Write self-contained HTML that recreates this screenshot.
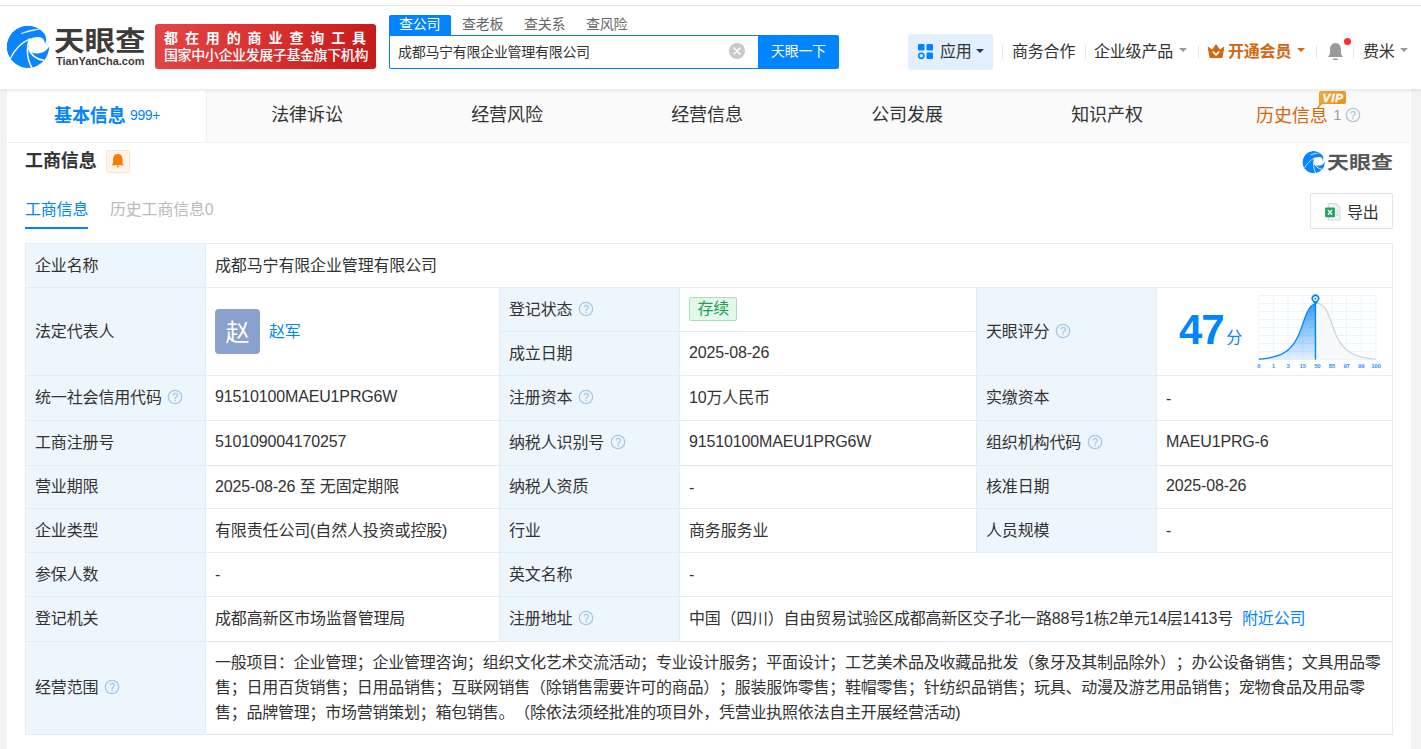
<!DOCTYPE html>
<html lang="zh-CN">
<head>
<meta charset="utf-8">
<title>成都马宁有限企业管理有限公司 - 天眼查</title>
<style>
*{box-sizing:border-box;margin:0;padding:0}
html,body{width:1421px;height:749px;overflow:hidden;background:#f3f3f3;}
body{position:relative;font-family:"Liberation Sans","Noto Sans CJK SC",sans-serif;font-size:16px;color:#333;}
.abs{position:absolute;white-space:nowrap;line-height:1}
#hdr{position:absolute;left:0;top:0;width:1421px;height:89px;background:#fff;box-shadow:0 0 5px rgba(0,0,0,.16);z-index:5}
#topline{position:absolute;left:0;top:5px;width:1421px;height:1px;background:#e6e6e6}
#main{position:absolute;left:7px;top:88px;width:1404px;height:661px;background:#fff}
/* header */
.t16{font-size:16px;letter-spacing:-0.2px}
.t14{font-size:14px;letter-spacing:-0.3px}
.sep{position:absolute;width:1px;height:14px;top:45px;background:#e4e7ed}
.caret{position:absolute;width:0;height:0;border-left:4px solid transparent;border-right:4px solid transparent;border-top:4px solid #999}
/* tabs */
#tabs{position:absolute;left:0;top:2px;width:1403px;height:53px;background:#fafafa;border-bottom:1px solid #f0f0f0}
.tab{position:absolute;top:0;height:52px;width:200px;text-align:center;font-size:18px;line-height:51px;letter-spacing:-0.1px;color:#333;white-space:nowrap}
/* table */
.cell{position:absolute;border-right:1px solid #e2ecf5;border-bottom:1px solid #e2ecf5;padding-left:9px;padding-bottom:4px;display:flex;align-items:center;white-space:nowrap;font-size:16px;letter-spacing:-0.15px;color:#333;background:#fff}
.lab{background:#eef6fd}
.q{flex:none;margin-left:5.5px;position:relative;top:1.4px}
#tbl{position:absolute;left:18px;top:155px;width:1368px;height:492px;border-left:1px solid #e2ecf5;border-top:1px solid #e2ecf5}
#tbl .cell{margin-left:-1px;margin-top:-1px}
.lnk{color:#0084ff}
.ava{position:relative;top:2px;display:inline-block;width:45px;height:45px;border-radius:4px;background:#8aa0cd;color:#fff;font-size:24px;line-height:48px;text-align:center;letter-spacing:0;overflow:hidden}
.st{position:relative;top:1.3px;display:inline-block;height:24px;line-height:22px;padding:0 7.5px;border:1px solid #a6e1bb;background:#e3f7ea;color:#1e9e55;border-radius:2px;font-size:16px;letter-spacing:-0.3px}
.sc{font-size:42px;font-weight:bold;color:#0084ff;letter-spacing:-1px;font-family:"Liberation Sans",sans-serif}
.fen{font-size:16px;color:#0084ff;margin-left:2.5px;position:relative;top:6px}
.scope{white-space:nowrap;text-spacing-trim:space-all;line-height:25px;font-size:16px;letter-spacing:-0.25px}
.up{position:relative;top:1px}
.dash{position:relative;top:2.5px}
</style>
</head>
<body>
<div id="hdr">
<div id="topline"></div>
<!-- logo -->
<svg class="abs" style="left:2px;top:20px" width="54" height="54" viewBox="0 0 749 749">
<defs><clipPath id="lc"><circle cx="360" cy="372" r="295"/></clipPath></defs>
<g id="swirl" clip-path="url(#lc)">
<circle cx="360" cy="372" r="295" fill="#0a84ff"/>
<path d="M520,126 C585,160 640,250 597,332 L658,350 L760,300 L760,60 L520,60 Z" fill="#fff"/>
<path d="M380,265 C450,232 540,222 572,265 C590,290 596,312 597,332 L660,348 C640,410 585,458 500,463 C450,466 420,456 398,445 C375,420 362,395 366,375 C362,335 368,298 380,265 Z" fill="#fff"/>
<path d="M262,190 C340,148 430,128 522,128 C440,146 350,166 262,190 Z" fill="#fff" stroke="#fff" stroke-width="6"/>
<path d="M118,530 C170,420 260,320 385,262" fill="none" stroke="#fff" stroke-width="17" stroke-linecap="round"/>
<path d="M418,668 C356,560 332,410 380,265" fill="none" stroke="#fff" stroke-width="21"/>
<path d="M585,562 C480,545 395,480 364,385" fill="none" stroke="#fff" stroke-width="23"/>
</g>
</svg>
<div class="abs" id="lgt" style="left:54px;top:23px;font-size:27px;font-weight:700;color:#3e3a39;letter-spacing:0px;line-height:34px;font-family:'Noto Sans CJK SC',sans-serif;transform:scaleX(1.13);transform-origin:0 0">天眼查</div>
<div class="abs" id="lge" style="left:56px;top:55px;font-size:11px;font-weight:bold;color:#3e3a39;letter-spacing:0px;line-height:12px">TianYanCha.com</div>
<!-- red banner -->
<div class="abs" style="left:155px;top:24px;width:221px;height:44.7px;border-radius:3px;background:linear-gradient(100deg,#e24545 0%,#d93030 50%,#c61a1a 100%)"></div>
<div class="abs" style="left:164px;top:31px;font-size:14px;font-weight:bold;color:#fff;letter-spacing:6.9px;line-height:15px">都在用的商业查询工具</div>
<div class="abs" style="left:164px;top:48px;font-size:14px;font-weight:500;color:#fff;letter-spacing:-0.4px;line-height:15px">国家中小企业发展子基金旗下机构</div>
<!-- search -->
<div class="abs" style="left:389px;top:15px;width:62px;height:21px;background:#0084ff;border-radius:2px 2px 0 0"></div>
<div class="abs t14" style="left:399px;top:16px;color:#fff;line-height:16px">查公司</div>
<div class="abs t14" style="left:462px;top:16px;color:#666;line-height:16px">查老板</div>
<div class="abs t14" style="left:524px;top:16px;color:#666;line-height:16px">查关系</div>
<div class="abs t14" style="left:586px;top:16px;color:#666;line-height:16px">查风险</div>
<div class="abs" style="left:389px;top:35px;width:370px;height:34px;border:1px solid #0084ff;border-radius:2px 0 0 2px;background:#fff"></div>
<div class="abs t14" style="left:398px;top:44px;color:#333;line-height:16px">成都马宁有限企业管理有限公司</div>
<svg class="abs" style="left:728px;top:42px" width="18" height="18" viewBox="0 0 18 18"><circle cx="9" cy="9" r="8" fill="#c8c9cc"/><path d="M6,6 L12,12 M12,6 L6,12" stroke="#fff" stroke-width="1.6" stroke-linecap="round"/></svg>
<div class="abs" style="left:758px;top:35px;width:81px;height:34px;background:#0084ff;border-radius:0 2px 2px 0"></div>
<div class="abs t14" style="left:771px;top:43px;color:#fff;line-height:16px">天眼一下</div>
<!-- nav -->
<div class="abs" style="left:908px;top:34px;width:85px;height:36px;background:#e1efff;border-radius:3px"></div>
<svg class="abs" style="left:917px;top:43px" width="17" height="17" viewBox="0 0 17 17"><rect x="1" y="1" width="6.5" height="6.5" rx="1.2" fill="#0084ff"/><rect x="9.5" y="1" width="6.5" height="6.5" rx="1.2" fill="#0084ff"/><rect x="9.5" y="9.5" width="6.5" height="6.5" rx="1.2" fill="#0084ff"/><circle cx="4.3" cy="12.8" r="2.6" fill="none" stroke="#0084ff" stroke-width="1.6"/></svg>
<div class="abs t16" style="left:940px;top:43px;color:#333;line-height:18px">应用</div>
<div class="caret" style="left:976px;top:49px;border-top-color:#333"></div>
<div class="sep" style="left:1002px"></div>
<div class="abs t16" style="left:1012px;top:43px;color:#333;line-height:18px">商务合作</div>
<div class="sep" style="left:1085px"></div>
<div class="abs t16" style="left:1094px;top:43px;color:#333;line-height:18px">企业级产品</div>
<div class="caret" style="left:1179px;top:48px"></div>
<div class="sep" style="left:1198px"></div>
<svg class="abs" style="left:1207px;top:43px" width="18" height="16" viewBox="0 0 18 16"><path d="M1.2,4.2 L5.2,7.2 L9,1.6 L12.8,7.2 L16.8,4.2 L15,14.6 L3,14.6 Z" fill="#d4670d" stroke="#d4670d" stroke-width="1" stroke-linejoin="round"/><path d="M6.3,9 L9,11.8 L11.7,9" fill="none" stroke="#fff" stroke-width="1.8" stroke-linecap="round" stroke-linejoin="round"/></svg>
<div class="abs t16" style="left:1228px;top:43px;color:#d4670d;font-weight:bold;line-height:18px">开通会员</div>
<div class="caret" style="left:1296.5px;top:48px;border-top-color:#d4670d"></div>
<div class="sep" style="left:1316px"></div>
<svg class="abs" style="left:1326px;top:41px" width="19" height="21" viewBox="0 0 19 21"><path d="M9.5,2 C5.8,2 4,5 4,8.5 L4,13 L2,16 L17,16 L15,13 L15,8.5 C15,5 13.2,2 9.5,2 Z" fill="#9a9a9a"/><rect x="7" y="17.6" width="5" height="1.3" rx=".6" fill="#9a9a9a"/></svg>
<div class="abs" style="left:1344px;top:38px;width:7px;height:7px;border-radius:50%;background:#ff2d2d"></div>
<div class="sep" style="left:1353px"></div>
<div class="abs t16" style="left:1363px;top:43px;color:#333;line-height:18px">费米</div>
<div class="caret" style="left:1400px;top:48px"></div>
</div>
<div id="main">
<div id="tabs">
<div class="tab" style="left:0;width:200px;height:52px;background:#fff;border-right:1px solid #f0f0f0"></div>
<div class="abs" id="tb0" style="left:47px;top:15px;font-size:18px;font-weight:bold;color:#0084ff;letter-spacing:-0.1px;line-height:22px">基本信息</div>
<div class="abs" style="left:123px;top:17px;font-size:14px;color:#0084ff;letter-spacing:-0.4px;line-height:16px">999+</div>
<div class="tab" style="left:200px">法律诉讼</div>
<div class="tab" style="left:400px">经营风险</div>
<div class="tab" style="left:600px">经营信息</div>
<div class="tab" style="left:800px">公司发展</div>
<div class="tab" style="left:1000px">知识产权</div>
<div class="abs" id="tb6" style="left:1249px;top:15px;font-size:18px;color:#d4670d;letter-spacing:-0.1px;line-height:22px">历史信息</div>
<div class="abs" style="left:1326.5px;top:17px;font-size:14px;color:#999;line-height:16px">1</div>
<svg class="abs" style="left:1337.7px;top:16.9px" width="16" height="16" viewBox="0 0 16 16"><circle cx="8" cy="8" r="6.7" fill="none" stroke="#b7c6d8" stroke-width="1.3"/><text x="8" y="11.7" text-anchor="middle" font-size="10.5" fill="#b7c6d8" stroke="#b7c6d8" stroke-width=".3" font-family="Liberation Sans, sans-serif">?</text></svg>
<svg class="abs" style="left:1311px;top:0px" width="30" height="18" viewBox="0 0 30 18"><defs><linearGradient id="vg" x1="0" y1="0" x2="1" y2="1"><stop offset="0" stop-color="#f6a93f"/><stop offset="1" stop-color="#ea8a1c"/></linearGradient></defs><path d="M3,1 H26 Q28,1 28,3 V12 Q28,14 26,14 H4.5 L1,17 V3 Q1,1 3,1 Z" fill="url(#vg)"/><text x="15.2" y="11.9" font-family="Liberation Sans, sans-serif" font-size="11.5" font-weight="bold" font-style="italic" fill="#fff" stroke="#fff" stroke-width="0.4" text-anchor="middle" letter-spacing="0.9">VIP</text></svg>
</div>
<!-- section head -->
<div class="abs" id="sh" style="left:18px;top:62px;font-size:18px;font-weight:bold;color:#333;letter-spacing:-0.1px;line-height:22px">工商信息</div>
<div class="abs" style="left:99px;top:62px;width:24px;height:23px;background:#fff4e9;border:1px solid #ffe4cc;border-radius:2px"></div>
<svg class="abs" style="left:103.2px;top:65.3px" width="15.6" height="16.7" viewBox="0 0 14 15"><path d="M7,1 C4.2,1 2.8,3.2 2.8,5.8 L2.8,9 L1.6,11 L12.4,11 L11.2,9 L11.2,5.8 C11.2,3.2 9.8,1 7,1 Z" fill="#ff7a00"/><path d="M5.6,11.6 H8.4 L7,13.2 Z" fill="#ff7a00"/></svg>
<svg class="abs" style="left:1293.3px;top:59.5px" width="28.5" height="28.5" viewBox="0 0 749 749"><defs><clipPath id="lc2"><circle cx="360" cy="372" r="295"/></clipPath></defs><g clip-path="url(#lc2)">
<circle cx="360" cy="372" r="295" fill="#0a84ff"/>
<path d="M520,126 C585,160 640,250 597,332 L658,350 L760,300 L760,60 L520,60 Z" fill="#fff"/>
<path d="M380,265 C450,232 540,222 572,265 C590,290 596,312 597,332 L660,348 C640,410 585,458 500,463 C450,466 420,456 398,445 C375,420 362,395 366,375 C362,335 368,298 380,265 Z" fill="#fff"/>
<path d="M262,190 C340,148 430,128 522,128 C440,146 350,166 262,190 Z" fill="#fff" stroke="#fff" stroke-width="6"/>
<path d="M118,530 C170,420 260,320 385,262" fill="none" stroke="#fff" stroke-width="17" stroke-linecap="round"/>
<path d="M418,668 C356,560 332,410 380,265" fill="none" stroke="#fff" stroke-width="21"/>
<path d="M585,562 C480,545 395,480 364,385" fill="none" stroke="#fff" stroke-width="23"/>
</g></svg>
<div class="abs" id="sl" style="left:1320px;top:59.8px;font-size:17.8px;font-weight:700;color:#555;line-height:26px;font-family:'Noto Sans CJK SC',sans-serif;transform:scaleX(1.235);transform-origin:0 0">天眼查</div>
<!-- sub tabs -->
<div class="abs t16" id="st0" style="left:18px;top:113px;color:#0084ff;line-height:18px">工商信息</div>
<div class="abs" style="left:18px;top:138.5px;width:63px;height:2.5px;background:#0084ff"></div>
<div class="abs t16" id="st1" style="left:103px;top:113px;color:#bbb;line-height:18px">历史工商信息0</div>
<div class="abs" style="left:1303px;top:105px;width:83px;height:36px;border:1px solid #dfe3ee;border-radius:2px;background:#fff"></div>
<svg class="abs" style="left:1316.5px;top:113.6px" width="17.5" height="19.7" viewBox="0 0 16 18"><path d="M4,1.5 H11 L14.5,5 V16.5 H4 Z" fill="#f4f5f7" stroke="#d5d8de" stroke-width="1"/><rect x="1" y="5" width="9" height="9" rx="1" fill="#1fa463"/><path d="M3.6,7.4 L7.4,11.6 M7.4,7.4 L3.6,11.6" stroke="#fff" stroke-width="1.3"/><path d="M11.3,8 H13 M11.3,10 H13 M11.3,12 H13" stroke="#c9ccd2" stroke-width="1"/></svg>
<div class="abs t16" style="left:1340px;top:115.5px;color:#333;line-height:18px">导出</div>
<div id="tbl">
<div class="cell lab" style="left:1px;top:1px;width:180px;height:44px">企业名称</div>
<div class="cell" style="left:181px;top:1px;width:1187px;height:44px">成都马宁有限企业管理有限公司</div>
<div class="cell lab" style="left:1px;top:45px;width:180px;height:88px">法定代表人</div>
<div class="cell" style="left:181px;top:45px;width:294px;height:88px;padding-left:9px"><span class="ava">赵</span><span class="lnk" style="margin-left:9px">赵军</span></div>
<div class="cell lab" style="left:475px;top:45px;width:180px;height:44px">登记状态<svg class="q" width="16" height="16" viewBox="0 0 16 16"><circle cx="8" cy="8" r="6.7" fill="none" stroke="#a8c8ea" stroke-width="1.3"/><text x="8" y="11.7" text-anchor="middle" font-size="10.5" fill="#a8c8ea" stroke="#a8c8ea" stroke-width=".3" font-family="Liberation Sans, sans-serif">?</text></svg></div>
<div class="cell" style="left:655px;top:45px;width:297px;height:44px"><span class="st">存续</span></div>
<div class="cell lab" style="left:475px;top:89px;width:180px;height:44px">成立日期</div>
<div class="cell" style="left:655px;top:89px;width:297px;height:44px"><span class="up">2025-08-26</span></div>
<div class="cell lab" style="left:952px;top:45px;width:180px;height:88px">天眼评分<svg class="q" width="16" height="16" viewBox="0 0 16 16"><circle cx="8" cy="8" r="6.7" fill="none" stroke="#a8c8ea" stroke-width="1.3"/><text x="8" y="11.7" text-anchor="middle" font-size="10.5" fill="#a8c8ea" stroke="#a8c8ea" stroke-width=".3" font-family="Liberation Sans, sans-serif">?</text></svg></div>
<div class="cell" style="left:1132px;top:45px;width:236px;height:88px;padding-left:22px"><span class="sc">47</span><span class="fen">分</span></div>
<div class="cell lab" style="left:1px;top:133px;width:180px;height:45px">统一社会信用代码<svg class="q" width="16" height="16" viewBox="0 0 16 16"><circle cx="8" cy="8" r="6.7" fill="none" stroke="#a8c8ea" stroke-width="1.3"/><text x="8" y="11.7" text-anchor="middle" font-size="10.5" fill="#a8c8ea" stroke="#a8c8ea" stroke-width=".3" font-family="Liberation Sans, sans-serif">?</text></svg></div>
<div class="cell" style="left:181px;top:133px;width:294px;height:45px"><span class="up">91510100MAEU1PRG6W</span></div>
<div class="cell lab" style="left:475px;top:133px;width:180px;height:45px">注册资本<svg class="q" width="16" height="16" viewBox="0 0 16 16"><circle cx="8" cy="8" r="6.7" fill="none" stroke="#a8c8ea" stroke-width="1.3"/><text x="8" y="11.7" text-anchor="middle" font-size="10.5" fill="#a8c8ea" stroke="#a8c8ea" stroke-width=".3" font-family="Liberation Sans, sans-serif">?</text></svg></div>
<div class="cell" style="left:655px;top:133px;width:297px;height:45px">10万人民币</div>
<div class="cell lab" style="left:952px;top:133px;width:180px;height:45px">实缴资本</div>
<div class="cell" style="left:1132px;top:133px;width:236px;height:45px"><span class="dash">-</span></div>
<div class="cell lab" style="left:1px;top:178px;width:180px;height:45px">工商注册号</div>
<div class="cell" style="left:181px;top:178px;width:294px;height:45px"><span class="up">510109004170257</span></div>
<div class="cell lab" style="left:475px;top:178px;width:180px;height:45px">纳税人识别号<svg class="q" width="16" height="16" viewBox="0 0 16 16"><circle cx="8" cy="8" r="6.7" fill="none" stroke="#a8c8ea" stroke-width="1.3"/><text x="8" y="11.7" text-anchor="middle" font-size="10.5" fill="#a8c8ea" stroke="#a8c8ea" stroke-width=".3" font-family="Liberation Sans, sans-serif">?</text></svg></div>
<div class="cell" style="left:655px;top:178px;width:297px;height:45px"><span class="up">91510100MAEU1PRG6W</span></div>
<div class="cell lab" style="left:952px;top:178px;width:180px;height:45px">组织机构代码<svg class="q" width="16" height="16" viewBox="0 0 16 16"><circle cx="8" cy="8" r="6.7" fill="none" stroke="#a8c8ea" stroke-width="1.3"/><text x="8" y="11.7" text-anchor="middle" font-size="10.5" fill="#a8c8ea" stroke="#a8c8ea" stroke-width=".3" font-family="Liberation Sans, sans-serif">?</text></svg></div>
<div class="cell" style="left:1132px;top:178px;width:236px;height:45px"><span class="up">MAEU1PRG-6</span></div>
<div class="cell lab" style="left:1px;top:223px;width:180px;height:43px">营业期限</div>
<div class="cell" style="left:181px;top:223px;width:294px;height:43px">2025-08-26 至 无固定期限</div>
<div class="cell lab" style="left:475px;top:223px;width:180px;height:43px">纳税人资质</div>
<div class="cell" style="left:655px;top:223px;width:297px;height:43px"><span class="dash">-</span></div>
<div class="cell lab" style="left:952px;top:223px;width:180px;height:43px">核准日期</div>
<div class="cell" style="left:1132px;top:223px;width:236px;height:43px"><span class="up">2025-08-26</span></div>
<div class="cell lab" style="left:1px;top:266px;width:180px;height:44px">企业类型</div>
<div class="cell" style="left:181px;top:266px;width:294px;height:44px">有限责任公司(自然人投资或控股)</div>
<div class="cell lab" style="left:475px;top:266px;width:180px;height:44px">行业</div>
<div class="cell" style="left:655px;top:266px;width:297px;height:44px">商务服务业</div>
<div class="cell lab" style="left:952px;top:266px;width:180px;height:44px">人员规模</div>
<div class="cell" style="left:1132px;top:266px;width:236px;height:44px"><span class="dash">-</span></div>
<div class="cell lab" style="left:1px;top:310px;width:180px;height:44px">参保人数</div>
<div class="cell" style="left:181px;top:310px;width:294px;height:44px"><span class="dash">-</span></div>
<div class="cell lab" style="left:475px;top:310px;width:180px;height:44px">英文名称</div>
<div class="cell" style="left:655px;top:310px;width:713px;height:44px"><span class="dash">-</span></div>
<div class="cell lab" style="left:1px;top:354px;width:180px;height:44.5px">登记机关</div>
<div class="cell" style="left:181px;top:354px;width:294px;height:44.5px">成都高新区市场监督管理局</div>
<div class="cell lab" style="left:475px;top:354px;width:180px;height:44.5px">注册地址<svg class="q" width="16" height="16" viewBox="0 0 16 16"><circle cx="8" cy="8" r="6.7" fill="none" stroke="#a8c8ea" stroke-width="1.3"/><text x="8" y="11.7" text-anchor="middle" font-size="10.5" fill="#a8c8ea" stroke="#a8c8ea" stroke-width=".3" font-family="Liberation Sans, sans-serif">?</text></svg></div>
<div class="cell" style="left:655px;top:354px;width:713px;height:44.5px"><span style="letter-spacing:-0.23px">中国（四川）自由贸易试验区成都高新区交子北一路88号1栋2单元14层1413号</span><span class="lnk" style="margin-left:9px">附近公司</span></div>
<div class="cell lab" style="left:1px;top:398.5px;width:180px;height:93.5px">经营范围<svg class="q" width="16" height="16" viewBox="0 0 16 16"><circle cx="8" cy="8" r="6.7" fill="none" stroke="#a8c8ea" stroke-width="1.3"/><text x="8" y="11.7" text-anchor="middle" font-size="10.5" fill="#a8c8ea" stroke="#a8c8ea" stroke-width=".3" font-family="Liberation Sans, sans-serif">?</text></svg></div>
<div class="cell" style="left:181px;top:398.5px;width:1187px;height:93.5px"><div class="scope" style="position:relative;top:2px">一般项目：企业管理；企业管理咨询；组织文化艺术交流活动；专业设计服务；平面设计；工艺美术品及收藏品批发（象牙及其制品除外）；办公设备销售；文具用品零<br>售；日用百货销售；日用品销售；互联网销售（除销售需要许可的商品）；服装服饰零售；鞋帽零售；针纺织品销售；玩具、动漫及游艺用品销售；宠物食品及用品零<br>售；品牌管理；市场营销策划；箱包销售。（除依法须经批准的项目外，凭营业执照依法自主开展经营活动)</div></div>
</div>
<svg class="abs" id="chart" style="left:1243px;top:202px" width="140" height="82" viewBox="0 0 140 82">
<defs><linearGradient id="cg" x1="0" y1="0" x2="0" y2="1"><stop offset="0" stop-color="#0084ff" stop-opacity=".78"/><stop offset="1" stop-color="#0084ff" stop-opacity=".1"/></linearGradient></defs>
<path d="M8.76,5.47 V69.51 M23.40,5.47 V69.51 M38.04,5.47 V69.51 M52.68,5.47 V69.51 M67.32,5.47 V69.51 M81.96,5.47 V69.51 M96.60,5.47 V69.51 M111.24,5.47 V69.51 M125.88,5.47 V69.51 M8.76,5.47 H125.88 M8.76,13.48 H125.88 M8.76,21.48 H125.88 M8.76,29.49 H125.88 M8.76,37.49 H125.88 M8.76,45.49 H125.88 M8.76,53.50 H125.88 M8.76,61.50 H125.88 M8.76,69.51 H125.88" fill="none" stroke="#ebf3fc" stroke-width="1"/>
<path d="M65.46,13.57 C65.77,13.50 66.55,13.08 67.32,13.13 C68.08,13.19 69.05,13.39 70.05,13.90 C71.06,14.41 72.24,15.05 73.34,16.20 C74.43,17.35 75.53,18.75 76.62,20.80 C77.71,22.84 78.81,25.63 79.90,28.46 C81.00,31.29 82.09,34.84 83.19,37.76 C84.28,40.68 85.19,43.33 86.47,45.97 C87.75,48.62 89.21,51.35 90.85,53.63 C92.49,55.91 94.13,57.83 96.32,59.65 C98.51,61.48 101.48,63.36 103.98,64.58 C106.48,65.80 108.95,66.35 111.32,66.99 C113.69,67.63 115.79,68.05 118.21,68.41 C120.64,68.78 124.60,69.05 125.88,69.18 L125.88,69.51 L65.46,69.51 Z" fill="#f7f8f9" fill-opacity=".85"/>
<path d="M8.76,69.18 C10.03,69.05 13.99,68.78 16.42,68.41 C18.84,68.05 20.94,67.63 23.31,66.99 C25.69,66.35 28.15,65.80 30.65,64.58 C33.15,63.36 36.12,61.48 38.31,59.65 C40.50,57.83 42.14,55.91 43.78,53.63 C45.42,51.35 46.88,48.62 48.16,45.97 C49.44,43.33 50.35,40.68 51.44,37.76 C52.54,34.84 53.63,31.29 54.73,28.46 C55.82,25.63 56.92,22.84 58.01,20.80 C59.11,18.75 60.20,17.35 61.30,16.20 C62.39,15.05 63.89,14.34 64.58,13.90 C65.27,13.46 65.31,13.63 65.46,13.57 L65.46,69.51 L8.76,69.51 Z" fill="url(#cg)"/>
<path d="M65.46,13.57 C65.77,13.50 66.55,13.08 67.32,13.13 C68.08,13.19 69.05,13.39 70.05,13.90 C71.06,14.41 72.24,15.05 73.34,16.20 C74.43,17.35 75.53,18.75 76.62,20.80 C77.71,22.84 78.81,25.63 79.90,28.46 C81.00,31.29 82.09,34.84 83.19,37.76 C84.28,40.68 85.19,43.33 86.47,45.97 C87.75,48.62 89.21,51.35 90.85,53.63 C92.49,55.91 94.13,57.83 96.32,59.65 C98.51,61.48 101.48,63.36 103.98,64.58 C106.48,65.80 108.95,66.35 111.32,66.99 C113.69,67.63 115.79,68.05 118.21,68.41 C120.64,68.78 124.60,69.05 125.88,69.18" fill="none" stroke="#bfd0e3" stroke-width="1.1"/>
<path d="M8.76,69.18 C10.03,69.05 13.99,68.78 16.42,68.41 C18.84,68.05 20.94,67.63 23.31,66.99 C25.69,66.35 28.15,65.80 30.65,64.58 C33.15,63.36 36.12,61.48 38.31,59.65 C40.50,57.83 42.14,55.91 43.78,53.63 C45.42,51.35 46.88,48.62 48.16,45.97 C49.44,43.33 50.35,40.68 51.44,37.76 C52.54,34.84 53.63,31.29 54.73,28.46 C55.82,25.63 56.92,22.84 58.01,20.80 C59.11,18.75 60.20,17.35 61.30,16.20 C62.39,15.05 63.89,14.34 64.58,13.90 C65.27,13.46 65.31,13.63 65.46,13.57" fill="none" stroke="#0084ff" stroke-width="1.3"/>
<path d="M65.46,13.35 V69.51" stroke="#0084ff" stroke-width="1.4"/>
<path d="M65.46,14.89 L62.39,10.95 A3.94,3.94 0 1 1 68.52,10.95 Z" fill="#0084ff"/>
<circle cx="65.46" cy="8.76" r="2.41" fill="#fff"/>
<circle cx="65.46" cy="8.76" r="0.99" fill="#0084ff"/>
<g font-family="Liberation Sans, sans-serif" font-size="6" font-weight="bold" fill="#2e94ff" text-anchor="middle" letter-spacing="-0.2"><text x="8.76" y="77.93">0</text><text x="23.40" y="77.93">1</text><text x="38.04" y="77.93">3</text><text x="52.68" y="77.93">15</text><text x="67.32" y="77.93">50</text><text x="81.96" y="77.93">85</text><text x="96.60" y="77.93">97</text><text x="111.24" y="77.93">99</text><text x="125.88" y="77.93">100</text></g>
</svg>
</div>
</body>
</html>
